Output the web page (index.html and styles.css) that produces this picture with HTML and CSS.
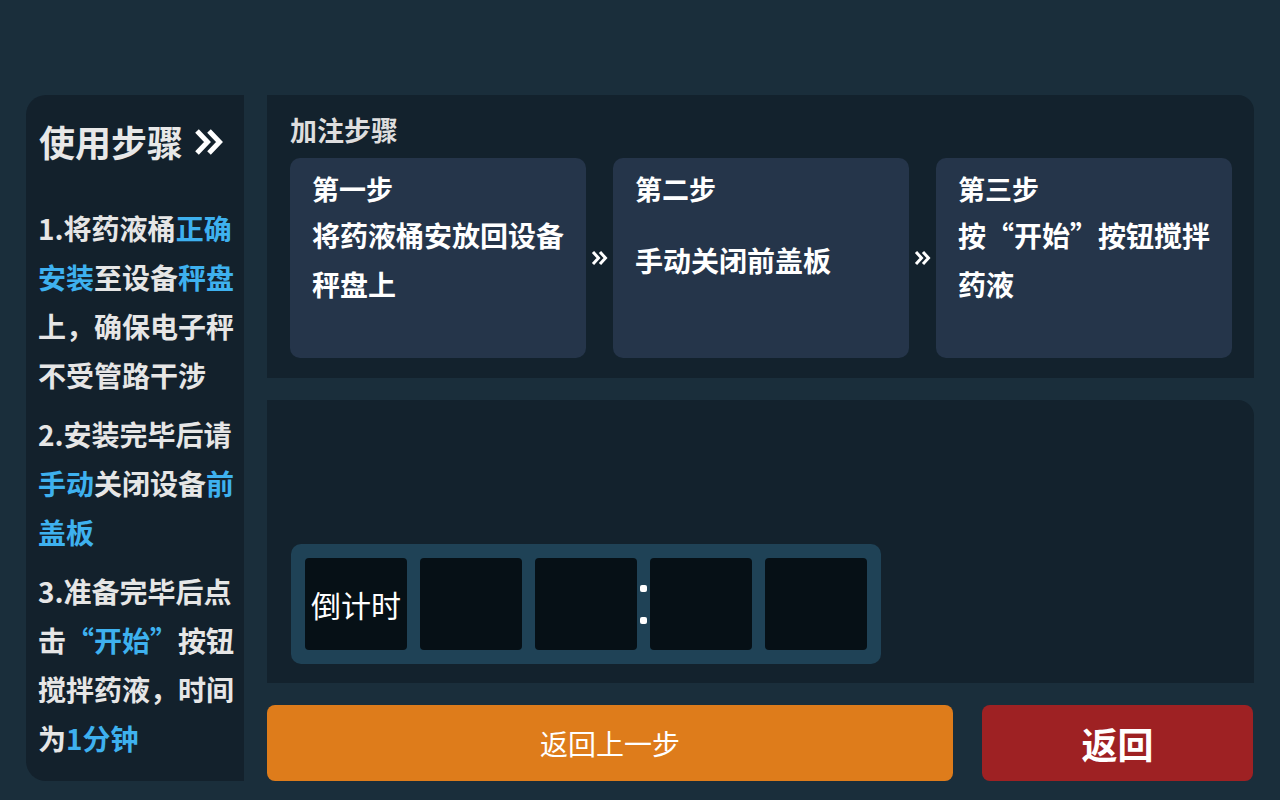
FILE: index.html
```html
<!DOCTYPE html>
<html lang="zh-CN">
<head>
<meta charset="utf-8">
<title>加注步骤</title>
<link rel="stylesheet" href="styles.css">
</head>
<body>
<div class="page">
  <aside class="guide">
    <h1 class="guide-title">使用步骤
      <svg class="chev-big" width="30" height="28" viewBox="0 0 30 28"><path d="M3 3 L13.5 14 L3 25 M15 3 L25.5 14 L15 25" fill="none" stroke="#fff" stroke-width="5" stroke-linejoin="miter"/></svg>
    </h1>
    <p class="guide-p">
      <span class="ln">1.将药液桶<span class="hl">正确</span></span>
      <span class="ln"><span class="hl">安装</span>至设备<span class="hl">秤盘</span></span>
      <span class="ln">上，确保电子秤</span>
      <span class="ln">不受管路干涉</span>
    </p>
    <p class="guide-p">
      <span class="ln">2.安装完毕后请</span>
      <span class="ln"><span class="hl">手动</span>关闭设备<span class="hl">前</span></span>
      <span class="ln"><span class="hl">盖板</span></span>
    </p>
    <p class="guide-p">
      <span class="ln">3.准备完毕后点</span>
      <span class="ln">击<span class="hl">“开始”</span>按钮</span>
      <span class="ln">搅拌药液，时间</span>
      <span class="ln">为<span class="hl">1分钟</span></span>
    </p>
  </aside>
  <main class="main">
    <section class="steps-panel">
      <h2 class="steps-title">加注步骤</h2>
      <div class="steps-row">
        <div class="card">
          <div class="card-title">第一步</div>
          <div class="card-body"><span>将药液桶安放回设备秤盘上</span></div>
        </div>
        <div class="arrow"><svg width="17" height="16" viewBox="0 0 17 16"><path d="M2 2 L7.5 8 L2 14 M9 2 L14.5 8 L9 14" fill="none" stroke="#fff" stroke-width="3"/></svg></div>
        <div class="card">
          <div class="card-title">第二步</div>
          <div class="card-body"><span>手动关闭前盖板</span></div>
        </div>
        <div class="arrow"><svg width="17" height="16" viewBox="0 0 17 16"><path d="M2 2 L7.5 8 L2 14 M9 2 L14.5 8 L9 14" fill="none" stroke="#fff" stroke-width="3"/></svg></div>
        <div class="card">
          <div class="card-title">第三步</div>
          <div class="card-body"><span>按“开始”按钮搅拌药液</span></div>
        </div>
      </div>
    </section>
    <section class="timer-panel">
      <div class="timer">
        <div class="cell cell-label">倒计时</div>
        <div class="cell"></div>
        <div class="cell"></div>
        <div class="colon"><i></i><i></i></div>
        <div class="cell"></div>
        <div class="cell"></div>
      </div>
    </section>
    <div class="actions">
      <button class="btn btn-prev">返回上一步</button>
      <button class="btn btn-back">返回</button>
    </div>
  </main>
</div>
</body>
</html>
```

FILE: styles.css
```css
* { box-sizing: border-box; }
html, body { margin: 0; padding: 0; }
body {
  width: 1280px;
  height: 800px;
  background: #1a2e3b;
  font-family: "Noto Sans CJK SC", "Noto Sans", sans-serif;
  color: #fff;
  overflow: hidden;
}
.page {
  display: flex;
  gap: 23px;
  padding: 95px 26px 0 26px;
}
.guide {
  width: 218px;
  height: 686px;
  flex: none;
  background: #13212c;
  border-radius: 20px 0 0 20px;
  padding: 20px 6px 0 12px;
}
.guide-title {
  margin: 0 0 37px 0;
  font-size: 36px;
  line-height: 52px;
  font-weight: 700;
  color: #e8e8e8;
  display: flex;
  align-items: center;
  gap: 11px;
  padding-left: 1px;
}
.chev-big { display: block; margin-top: 2px; }
.guide-p {
  margin: 0 0 10px 0;
  font-size: 28px;
  line-height: 49px;
  font-weight: 700;
  color: #e6e6e6;
}
.ln { display: block; white-space: nowrap; }
.hl { color: #3eb1ef; }
.main {
  width: 987px;
  flex: none;
  display: flex;
  flex-direction: column;
  gap: 22px;
}
.steps-panel {
  height: 283px;
  background: #13222d;
  border-radius: 0 16px 0 0;
  padding: 10px 23px 0 23px;
}
.steps-title {
  margin: 0 0 3px 0;
  font-size: 27px;
  line-height: 50px;
  font-weight: 700;
  color: #dedede;
}
.steps-row {
  display: flex;
  align-items: center;
}
.card {
  width: 296px;
  height: 200px;
  flex: none;
  background: #25354a;
  border-radius: 10px;
  padding: 10px 12px 0 22px;
}
.card-title {
  font-size: 27px;
  line-height: 42px;
  font-weight: 700;
}
.card-body {
  height: 100px;
  display: flex;
  align-items: center;
  font-size: 28px;
  line-height: 49px;
  font-weight: 700;
}
.arrow {
  width: 27px;
  flex: none;
  display: flex;
  justify-content: center;
}
.arrow svg { display: block; }
.timer-panel {
  height: 283px;
  background: #13222d;
  border-radius: 0 16px 0 0;
  padding: 0 24px 19px 24px;
  display: flex;
  flex-direction: column;
  justify-content: flex-end;
  align-items: flex-start;
}
.timer {
  display: flex;
  padding: 14px;
  background: #1f4256;
  border-radius: 10px;
}
.cell {
  width: 102px;
  height: 92px;
  background: #061016;
  border-radius: 4px;
}
.cell + .cell { margin-left: 13px; }
.cell-label {
  display: flex;
  align-items: center;
  justify-content: center;
  font-size: 30px;
  color: #fff;
}
.colon {
  width: 13px;
  display: flex;
  flex-direction: column;
  align-items: center;
  justify-content: center;
  gap: 25px;
}
.colon i {
  display: block;
  width: 7px;
  height: 7px;
  background: #fff;
  border-radius: 2px;
}
.actions {
  display: flex;
  gap: 29px;
  height: 76px;
}
.btn {
  border: 0;
  border-radius: 8px;
  color: #fff;
  font-family: "Noto Sans CJK SC", "Noto Sans", sans-serif;
  padding: 0;
}
.btn-prev {
  width: 686px;
  background: #de7c1b;
  font-size: 28px;
  font-weight: 400;
}
.btn-back {
  width: 271px;
  background: #9e2123;
  font-size: 36px;
  font-weight: 700;
}
```
